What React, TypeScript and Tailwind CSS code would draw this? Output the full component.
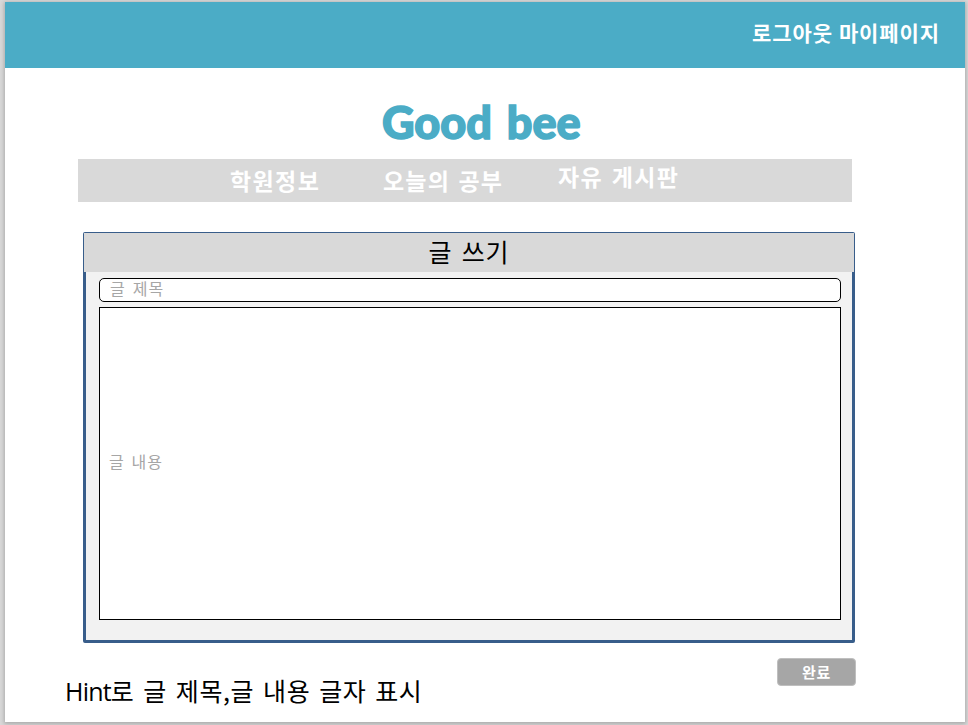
const sans = "font-['Noto_Sans_CJK_KR',sans-serif]";

function TopBar() {
  return (
    <header className="flex h-[66px] shrink-0 justify-end bg-[#4bacc6] pt-[14px] pr-[25px]">
      <nav className="flex h-8 gap-[6px] text-[21px] leading-8 font-bold tracking-[0.9px] text-white">
        <a>로그아웃</a>
        <a>마이페이지</a>
      </nav>
    </header>
  );
}

function MainNav() {
  return (
    <nav className="ml-[73px] flex h-[43px] w-[774px] bg-[#d9d9d9] pl-[152px] text-[23px] leading-8 font-bold whitespace-nowrap text-white">
      <a className="w-[153px] pt-[5px] tracking-[1.4px]">학원정보</a>
      <a className="w-[175px] pt-[5px] tracking-[1.2px] [word-spacing:2px]">오늘의 공부</a>
      <a className="pt-[1px] tracking-[1.4px] [word-spacing:2px]">자유 게시판</a>
    </nav>
  );
}

function WritePanel() {
  return (
    <section className="mt-[30px] ml-[78px] flex h-[411px] w-[772px] flex-col rounded-[2px] border-[1px] border-b-[3px] border-[#385d8a] bg-[#f2f2f2]">
      <h2 className="h-[39px] shrink-0 bg-[#d9d9d9] text-center text-[25px] leading-[36px] tracking-[0.8px] [word-spacing:3px]">
        글 쓰기
      </h2>
      <div className="flex flex-1 flex-col border-x-2 border-[#385d8a] pt-[6px] pr-[11px] pl-[13px]">
        <div className="h-6 rounded-[5px] border border-black bg-white pl-[10px] text-[16px] leading-[19px] tracking-[1.2px] text-[#a6a6a6] [word-spacing:2px]">
          글 제목
        </div>
        <div className="mt-[5px] flex h-[313px] items-center border border-black bg-white pb-[5px] pl-[9px] text-[16px] tracking-[1.1px] text-[#a6a6a6] [word-spacing:2px]">
          글 내용
        </div>
      </div>
    </section>
  );
}

export default function App() {
  return (
    <div className={`h-[725px] w-[968px] overflow-hidden bg-[#d9d9d9] pt-[2px] pl-[5px] ${sans}`}>
      <main className="flex h-[720px] w-[960px] flex-col bg-white text-black shadow-[0_1px_4px_1px_#aaa]">
        <TopBar />
        <h1 className="mt-[24px] ml-[377px] h-[67px] font-['Lato'] text-[45px] leading-[60px] font-black whitespace-nowrap text-[#4bacc6] [-webkit-text-stroke:1.5px_#4bacc6] [word-spacing:4px]">
          Good bee
        </h1>
        <MainNav />
        <WritePanel />
        <footer className="flex pl-[60px]">
          <p className="mt-[27px] w-[712px] text-[25px] leading-10 tracking-[0.6px] whitespace-nowrap [word-spacing:2.7px]">
            <span className="font-['Open_Sans'] tracking-[-0.8px]">Hint</span>로 글 제목,글 내용 글자 표시
          </p>
          <button className="mt-[15px] h-7 w-[79px] rounded-[4px] border border-[#bfbfbf] bg-[#a6a6a6] text-[15px] leading-[26px] font-bold tracking-[0.7px] text-white">
            완료
          </button>
        </footer>
      </main>
    </div>
  );
}
